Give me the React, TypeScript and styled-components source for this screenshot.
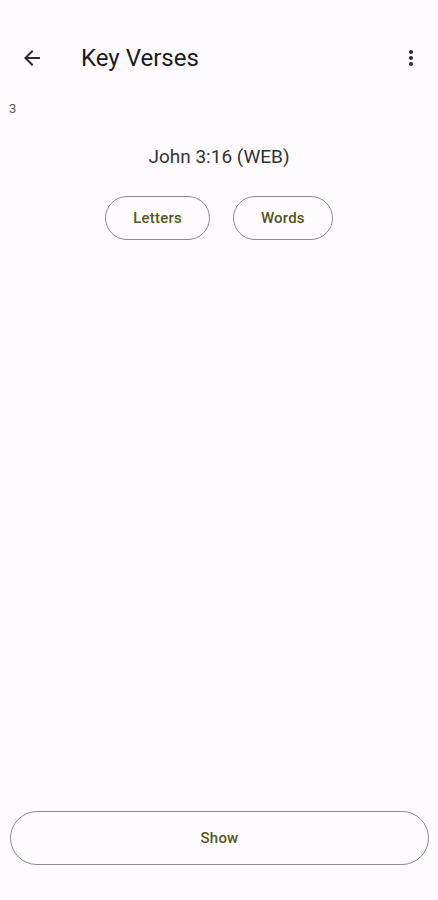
import styled, { createGlobalStyle } from "styled-components";

const GlobalStyle = createGlobalStyle`
  html, body {
    margin: 0;
    padding: 0;
    background: #fefbfe;
  }
  body {
    font-family: Roboto, "Noto Sans", Arial, sans-serif;
    color: #1d1b20;
  }
`;

const Screen = styled.div`
  display: flex;
  flex-direction: column;
  height: 900px;
  box-sizing: border-box;
  padding-top: 26px;
  padding-bottom: 35px;
  background: #fefbfe;
`;

const AppBar = styled.header`
  display: flex;
  align-items: center;
  height: 64px;
  padding: 0 15px 0 20px;
`;

const IconButton = styled.button`
  display: flex;
  align-items: center;
  justify-content: center;
  width: 24px;
  height: 24px;
  padding: 0;
  border: none;
  background: none;
  color: #2a2a2a;
`;

const Title = styled.h1`
  flex: 1;
  margin: 0 0 0 37px;
  font-size: 24px;
  font-weight: 400;
  line-height: 28px;
  color: #1d1b20;
`;

const Counter = styled.div`
  padding: 11px 0 0 9px;
  font-size: 13px;
  line-height: 16px;
  color: #555;
`;

const Reference = styled.div`
  margin-top: 28px;
  text-align: center;
  font-size: 19px;
  line-height: 24px;
  color: #333;
`;

const ChoiceRow = styled.div`
  display: flex;
  justify-content: center;
  gap: 23px;
  margin-top: 27px;
`;

const OutlinedButton = styled.button<{ $wide?: boolean }>`
  height: ${(p) => (p.$wide ? "54px" : "44px")};
  padding: 0 27px;
  border: 1px solid #8a8a8a;
  border-radius: 27px;
  background: transparent;
  font-family: Roboto, "Noto Sans", Arial, sans-serif;
  font-size: 15px;
  font-weight: 500;
  color: #545722;
  letter-spacing: 0.2px;
`;

const Spacer = styled.div`
  flex: 1;
`;

const Footer = styled.div`
  display: flex;
  flex-direction: column;
  padding: 0 9px 0 10px;
`;

const ArrowBack = () => (
  <svg width="24" height="24" viewBox="0 0 24 24" fill="currentColor">
    <path d="M20 11H7.83l5.59-5.59L12 4l-8 8 8 8 1.41-1.41L7.83 13H20v-2z" />
  </svg>
);

const MoreVert = () => (
  <svg width="24" height="24" viewBox="0 0 24 24" fill="currentColor">
    <path d="M12 8c1.1 0 2-.9 2-2s-.9-2-2-2-2 .9-2 2 .9 2 2 2zm0 2c-1.1 0-2 .9-2 2s.9 2 2 2 2-.9 2-2-.9-2-2-2zm0 6c-1.1 0-2 .9-2 2s.9 2 2 2 2-.9 2-2-.9-2-2-2z" />
  </svg>
);

export default function App() {
  return (
    <>
      <GlobalStyle />
      <Screen>
        <AppBar>
          <IconButton aria-label="Back">
            <ArrowBack />
          </IconButton>
          <Title>Key Verses</Title>
          <IconButton aria-label="More options">
            <MoreVert />
          </IconButton>
        </AppBar>
        <Counter>3</Counter>
        <Reference>John 3:16 (WEB)</Reference>
        <ChoiceRow>
          <OutlinedButton>Letters</OutlinedButton>
          <OutlinedButton>Words</OutlinedButton>
        </ChoiceRow>
        <Spacer />
        <Footer>
          <OutlinedButton $wide>Show</OutlinedButton>
        </Footer>
      </Screen>
    </>
  );
}
